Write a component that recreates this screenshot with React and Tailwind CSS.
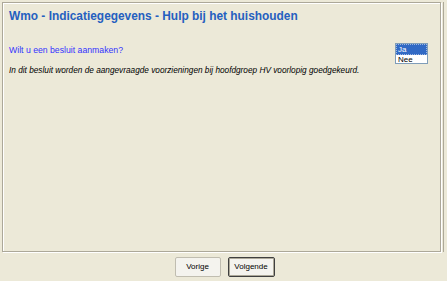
export default function App() {
  return (
    <div className="w-[447px] h-[281px] bg-[#ECE9D8] flex flex-col overflow-hidden font-['Liberation_Sans',sans-serif]">
      <div className="flex flex-1 min-h-0">
        <div className="ml-[2px] mt-[2px] w-[439px] h-[250px] border border-[#ACA899] shadow-[inset_1px_1px_0_#fff,1px_1px_0_#fff] px-[6px] pt-[5px]">
          <h1 className="font-bold text-[11.9px] leading-[16px] text-[#2560C0]">
            Wmo - Indicatiegegevens - Hulp bij het huishouden
          </h1>
          <div className="flex mt-[20px]">
            <div className="flex-1 pt-[1px]">
              <p className="text-[8.7px] leading-[10px] text-[#3333FF]">Wilt u een besluit aanmaken?</p>
              <p className="text-[8.25px] leading-[10px] italic text-black mt-[11px]">
                In dit besluit worden de aangevraagde voorzieningen bij hoofdgroep HV voorlopig goedgekeurd.
              </p>
            </div>
            <div className="mr-[6px] w-[33px] h-[21px] border border-[#7F9DB9] bg-white text-[8px] leading-[9px] mt-[-1px]">
              <div className="bg-[#316AC5] text-white pl-[1px] border border-dotted border-[#9fb8e0]">Ja</div>
              <div className="pl-[2px] text-black">Nee</div>
            </div>
          </div>
        </div>
        <div className="ml-[2px] mt-[2px] h-[250px] w-[1px] bg-[#ACA899]" />
      </div>
      <div className="flex justify-center gap-[7px] pb-[4px] pl-[2px] text-[8px]">
        <button className="w-[46px] h-[20px] bg-[#F4F3EE] border border-[#C0BDB0] rounded-[2px] text-black">
          Vorige
        </button>
        <button className="w-[47px] h-[20px] bg-[#F4F3EE] border border-[#3F3F3F] shadow-[inset_0_0_0_1px_#ACA899] rounded-[2px] text-black">
          Volgende
        </button>
      </div>
    </div>
  );
}
